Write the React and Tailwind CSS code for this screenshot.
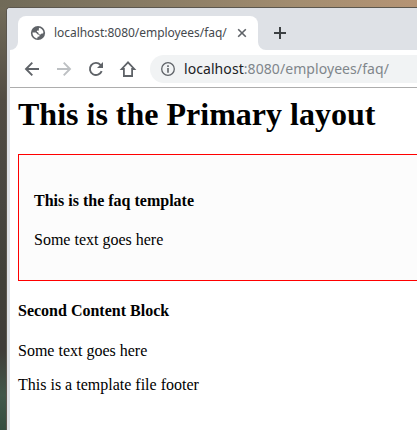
function Globe() {
  return (
    <svg className="h-4 w-4 shrink-0" viewBox="0 0 16 16">
      <circle cx="8" cy="8" r="7.100" fill="#5f6368" />
      <path fill="#fff" d="M9 2.700c2.200.400 4 2 4.400 4.200l-.300 1.700-1.500-.200-.900 1.100-1.800-.300-.700-1.700-1.500-.700.500-1.200 1.500.100.100-1.200zM2.500 7.500l3.300.100 2 1.800 1.700.500-.100 1.500-1.700.400-.500 1.600C4.500 13.100 2.500 10.800 2.500 7.500z" />
    </svg>
  );
}

function Tab() {
  return (
    <div className="flex h-[34px] w-60 items-center rounded-t-lg bg-white pl-3">
      <Globe />
      <span className="ml-2 w-[173px] whitespace-nowrap font-['Noto_Sans',sans-serif] text-[12px] leading-4 tracking-[-0.04px] text-[#45494d]">
        localhost:8080/employees/faq/
      </span>
      <svg className="ml-[10px] h-[10px] w-[10px]" viewBox="0 0 10 10" fill="none" stroke="#5f6368" strokeWidth="1.6">
        <path d="M1.200 1.200l7.600 7.600M8.800 1.200l-7.600 7.600" />
      </svg>
    </div>
  );
}

function TabStrip() {
  return (
    <div className="-ml-[3px] flex h-[42px] items-end rounded-tl-[3px] bg-[#dee1e6] pl-[3px]">
      <svg className="h-2 w-2" viewBox="0 0 8 8">
        <path fill="#fff" d="M8 0v8H0a8 8 0 0 0 8-8z" />
      </svg>
      <Tab />
      <svg className="h-2 w-2" viewBox="0 0 8 8">
        <path fill="#fff" d="M0 0v8h8a8 8 0 0 1-8-8z" />
      </svg>
      <svg className="mb-[11px] ml-2 h-3 w-3" viewBox="0 0 12 12">
        <path fill="#3c4043" d="M5 0h2v5h5v2H7v5H5V7H0V5h5z" />
      </svg>
    </div>
  );
}

function Toolbar() {
  return (
    <div className="flex h-[38px] items-center border-b border-[#adadad] bg-white pl-3">
      <svg className="h-5 w-5" viewBox="0 0 20 20" fill="none" stroke="#5f6368" strokeWidth="1.9">
        <path d="M17 10H4.300M10.300 3.700L4 10l6.300 6.300" />
      </svg>
      <svg className="ml-3 h-5 w-5" viewBox="0 0 20 20" fill="none" stroke="#bdc0c3" strokeWidth="1.9">
        <path d="M3 10h12.700M9.700 3.700L16 10l-6.300 6.300" />
      </svg>
      <svg className="ml-3 h-5 w-5" viewBox="0 0 20 20" fill="none" stroke="#5f6368" strokeWidth="1.9">
        <path d="M15.700 12.200A6.100 6.100 0 1 1 14.500 5.800L16 7.300" />
        <path fill="#5f6368" stroke="none" d="M17 3v6h-6z" />
      </svg>
      <svg className="ml-3 h-5 w-5" viewBox="0 0 20 20" fill="none" stroke="#5f6368" strokeWidth="1.8">
        <path d="M10 3.300L3.700 10H5.900V17h8.200V10h2.200z" />
      </svg>
      <div className="ml-3 flex h-7 flex-1 items-center rounded-l-full bg-[#f1f3f4] pl-[11px]">
        <svg className="h-[14px] w-[14px] shrink-0" viewBox="0 0 14 14">
          <circle cx="7" cy="7" r="6.300" fill="none" stroke="#5f6368" strokeWidth="1.300" />
          <path fill="#5f6368" d="M6.200 3.300h1.600v1.600H6.200zM6.200 6.100h1.600v4.600H6.200z" />
        </svg>
        <span className="ml-[9px] whitespace-nowrap font-['Noto_Sans',sans-serif] text-[14px] leading-5 tracking-[0.07px] text-[#80868b]">
          <span className="text-[#202124]">localhost</span>:8080/employees/faq/
        </span>
      </div>
    </div>
  );
}

export default function App() {
  return (
    <div className="h-[430px] w-[417px] overflow-hidden bg-[linear-gradient(to_bottom,#756e5b_0px,#514c43_100px,#484640_200px,#414039_280px,#403d39_350px,#42584b_395px,#344d40_430px)]">
      <div className="h-[7px] bg-[linear-gradient(to_right,#706a58,#8b7d65_40%,#a38d70_72%,#b59475)]" />
      <div className="ml-[6px] h-[423px] rounded-tl-[4px] border-l border-t border-[#5c574e] bg-[#dee1e6] pl-[3px]">
        <TabStrip />
        <Toolbar />
        <main className="h-[342px] bg-white pl-2 pt-2 font-['Liberation_Serif',serif] text-[16px] leading-[18px] text-black">
          <h1 className="text-[32px] font-bold leading-[37px]">This is the Primary layout</h1>
          <section className="mt-[21px] h-[127px] border border-r-0 border-[#f00] bg-[#fcfcfc] pl-[15px] pt-[37px]">
            <h4 className="font-bold">This is the faq template</h4>
            <p className="mt-[21px]">Some text goes here</p>
          </section>
          <h4 className="mt-[21px] font-bold">Second Content Block</h4>
          <p className="mt-[22px]">Some text goes here</p>
          <p className="mt-4">This is a template file footer</p>
        </main>
      </div>
    </div>
  );
}
